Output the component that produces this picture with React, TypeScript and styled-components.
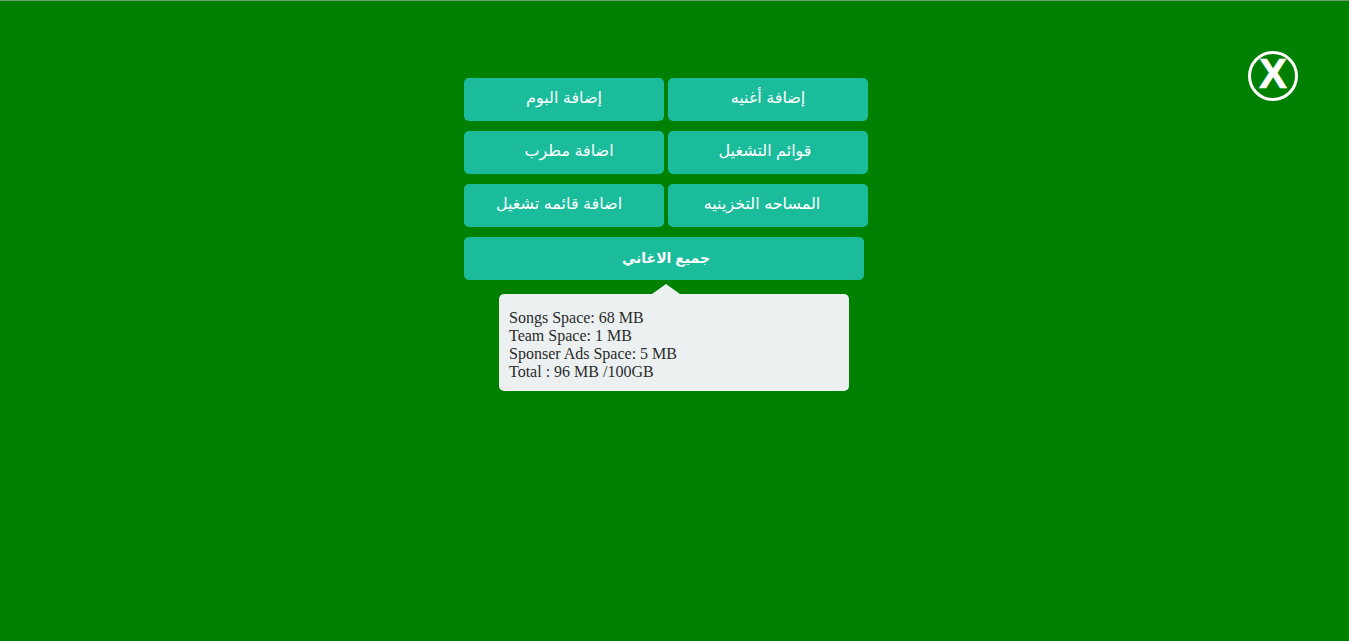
import React, { FC } from "react";
import styled, { createGlobalStyle } from "styled-components";

const GlobalStyle = createGlobalStyle`
  html, body {
    margin: 0;
    padding: 0;
    background: green;
  }
`;

const App: FC = () => (
  <>
    <GlobalStyle />
    <Page>
      <CloseButton aria-label="close">X</CloseButton>
      <Menu>
        <MenuButton>إضافة البوم</MenuButton>
        <MenuButton>إضافة أغنيه</MenuButton>
        <MenuButton $shift={-10}>اضافة مطرب</MenuButton>
        <MenuButton $shift={6}>قوائم التشغيل</MenuButton>
        <MenuButton $shift={10}>اضافة قائمه تشغيل</MenuButton>
        <MenuButton $shift={12}>المساحه التخزينيه</MenuButton>
        <WideButton $shift={-4}>جميع الاغاني</WideButton>
      </Menu>
      <SpaceTip>
        <div>Songs Space: 68 MB</div>
        <div>Team Space: 1 MB</div>
        <div>Sponser Ads Space: 5 MB</div>
        <div>Total : 96 MB /100GB</div>
      </SpaceTip>
    </Page>
  </>
);

export default App;

const Page = styled.div`
  position: relative;
  box-sizing: border-box;
  min-height: 100vh;
  padding: 77px 0 0 464px;
  background: green;
  border-top: 1px solid #6f9f6f;
`;

const CloseButton = styled.button`
  position: absolute;
  top: 50px;
  left: 1248px;
  display: flex;
  align-items: center;
  justify-content: center;
  box-sizing: border-box;
  width: 50px;
  height: 50px;
  padding: 0 0 5px;
  color: #fff;
  font-family: "Liberation Sans", sans-serif;
  font-weight: 700;
  font-size: 42px;
  line-height: 1;
  -webkit-text-stroke: 0.6px #fff;
  background: none;
  border: 3.5px solid #fff;
  border-radius: 50%;
`;

const Menu = styled.div`
  display: grid;
  grid-template-columns: 200px 200px;
  grid-auto-rows: 43px;
  column-gap: 4px;
  row-gap: 10px;
  width: 404px;
`;

const MenuButton = styled.button<{ $shift?: number }>`
  padding: 0 ${(p) => Math.max(p.$shift ?? 0, 0)}px 4px ${(p) => Math.max(-(p.$shift ?? 0), 0)}px;
  color: #fff;
  font-family: "Liberation Sans", "DejaVu Sans", sans-serif;
  font-size: 16px;
  background: #1abc9c;
  border: 0;
  border-radius: 5px;
`;

const WideButton = styled(MenuButton)`
  grid-column: 1 / 3;
  width: 400px;
  padding-bottom: 2px;
  font-weight: 700;
  font-size: 14px;
`;

const SpaceTip = styled.div`
  position: relative;
  box-sizing: border-box;
  width: 350px;
  height: 97px;
  margin: 14px 0 0 35px;
  padding: 15px 10px 10px;
  color: #2b2b2b;
  font-family: "Liberation Serif", serif;
  font-size: 16px;
  line-height: 18px;
  background: #ecf0f1;
  border-radius: 5px;

  &::before {
    position: absolute;
    top: -10px;
    left: 153px;
    border-right: 14px solid transparent;
    border-bottom: 10px solid #ecf0f1;
    border-left: 14px solid transparent;
    content: "";
  }
`;
